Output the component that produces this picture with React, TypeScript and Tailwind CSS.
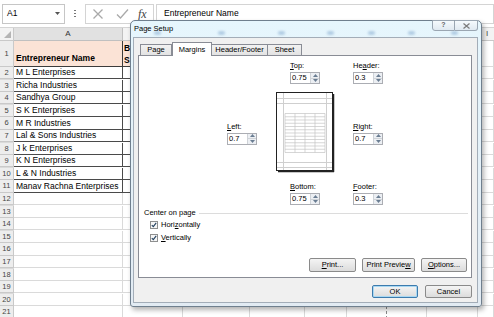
import React from "react";

const names = [
  "M L Enterprises",
  "Richa Industries",
  "Sandhya Group",
  "S K Enterprises",
  "M R Industries",
  "Lal & Sons Industries",
  "J k Enterprises",
  "K N Enterprises",
  "L & N Industries",
  "Manav Rachna Enterprises",
];

const cols = "grid grid-cols-[14px_109px_60px_67px_55px_42px_40px_40px_51px_1fr]";
const grid = "border-r border-b border-[#dadada]";

const Blank = () => (
  <>
    <div className={grid} />
    <div className={grid} />
    <div className={grid} />
    <div className={`${grid} [border-right-style:dashed] border-r-[#8a8a8a]`} />
    <div className={grid} />
    <div className={grid} />
    <div className={grid} />
    <div className="border-b border-[#dadada]" />
  </>
);

const RowHead = ({ n }: { n: number }) => (
  <div className="flex items-center justify-center border-r border-b border-[#c9c9c9] bg-[#ededed] text-[7.5px] text-[#444]">
    {n}
  </div>
);

function Sheet() {
  const rows = Array.from({ length: 20 }, (_, i) => i + 2);
  return (
    <div className="flex flex-col font-['Liberation_Sans',sans-serif]">
      {/* column headers, B..H sit under the dialog */}
      <div className={`${cols} h-[14px] border-t border-[#d4d4d4]`}>
        <div className="relative border-r border-b border-[#c9c9c9] bg-[#f3f3f3]">
          <svg className="absolute bottom-[2px] right-[2px]" width="7" height="7">
            <path d="M7 0 L7 7 L0 7Z" fill="#b5b5b5" />
          </svg>
        </div>
        <div className="flex items-center justify-center border-r border-b border-[#c0c0c0] bg-[#e1e1e1] text-[8px] text-[#333]">
          A
        </div>
        {["b", "c", "d", "e", "f", "g", "h"].map((c) => (
          <div key={c} className="border-r border-b border-[#c9c9c9] bg-[#f3f3f3]" />
        ))}
        <div className="flex items-center pl-[8px] border-b border-[#c9c9c9] bg-[#f3f3f3] text-[8px] text-[#444]">
          I
        </div>
      </div>

      {/* row 1 */}
      <div className={`${cols} h-[26px]`}>
        <RowHead n={1} />
        <div className="flex items-end border-r border-b border-[#3c3c3c] bg-[#fbe3d6] pb-[1px] pl-[2px] text-[8.5px] font-bold text-black">
          Entrepreneur Name
        </div>
        <div className="border-r border-b border-[#3c3c3c] bg-[#fbe3d6] pl-[1px] pt-[1px]">
          <div className="w-[6px] overflow-hidden text-[8.5px] font-bold leading-[12px] text-black">
            B
            <br />S
          </div>
        </div>
        <Blank />
      </div>

      {rows.map((r) => (
        <div key={r} className={`${cols} h-[12.6px]`}>
          <RowHead n={r} />
          {r <= 11 ? (
            <>
              <div className="flex items-center overflow-hidden whitespace-nowrap border-r border-b border-[#4a4a4a] pl-[2px] text-[8.5px] text-black">
                {names[r - 2]}
              </div>
              <div className="border-r border-b border-[#4a4a4a]" />
            </>
          ) : (
            <>
              <div className={grid} />
              <div className={grid} />
            </>
          )}
          <Blank />
        </div>
      ))}
    </div>
  );
}

function FormulaBar() {
  return (
    <div className="flex h-[27px] items-center bg-white pl-[2px] font-['Liberation_Sans',sans-serif]">
      <div className="flex h-[20px] w-[63px] items-center justify-between border border-[#c6c6c6] pl-[4px] pr-[4px] text-[8.5px] text-black">
        A1
        <svg width="5" height="3">
          <path d="M0 0 L5 0 L2.5 3Z" fill="#555" />
        </svg>
      </div>
      <div className="flex w-[20px] flex-col items-center gap-[1.5px]">
        <span className="h-[1.5px] w-[1.5px] bg-[#777]" />
        <span className="h-[1.5px] w-[1.5px] bg-[#777]" />
        <span className="h-[1.5px] w-[1.5px] bg-[#777]" />
      </div>
      <div className="flex h-[20px] w-[69px] items-center border border-[#d4d4d4] pl-[6px]">
        <svg width="12" height="12" viewBox="0 0 12 12">
          <path d="M1.5 1.5 L10.5 10.5 M10.5 1.5 L1.5 10.5" stroke="#a9a9a9" strokeWidth="1.3" />
        </svg>
        <svg className="ml-[12px]" width="13" height="12" viewBox="0 0 13 12">
          <path d="M1 6.5 L4.5 10 L12 1.5" stroke="#a9a9a9" strokeWidth="1.3" fill="none" />
        </svg>
        <span className="ml-[9px] font-['Liberation_Serif',serif] text-[12px] italic text-[#444]">fx</span>
      </div>
      <div className="ml-[2px] flex h-[20px] flex-1 items-center border border-[#d4d4d4] pl-[7px] text-[8.5px] text-black">
        Entrepreneur Name
      </div>
    </div>
  );
}

const U = ({ a, u, b }: { a?: string; u: string; b?: string }) => (
  <span>
    {a}
    <span className="underline">{u}</span>
    {b}
  </span>
);

function Spin({ v }: { v: string }) {
  return (
    <div className="flex h-[12px] w-[30px] border border-[#abadb3] bg-white">
      <span className="flex-1 pl-[1px] text-[7.5px] leading-[10px] text-black">{v}</span>
      <span className="flex w-[9px] flex-col border-l border-[#cfd3d8] bg-[#eceff3]">
        <span className="flex flex-1 items-center justify-center border-b border-[#cfd3d8]">
          <svg width="5" height="3">
            <path d="M0 3 L2.5 0 L5 3Z" fill="#6a7d92" />
          </svg>
        </span>
        <span className="flex flex-1 items-center justify-center">
          <svg width="5" height="3">
            <path d="M0 0 L5 0 L2.5 3Z" fill="#6a7d92" />
          </svg>
        </span>
      </span>
    </div>
  );
}

const Field = ({ label, v }: { label: React.ReactNode; v: string }) => (
  <div className="flex flex-col gap-[1px]">
    <div className="h-[11px] text-[7.5px] leading-[11px] text-black">{label}</div>
    <Spin v={v} />
  </div>
);

function Preview() {
  const rowsY = Array.from({ length: 13 }, (_, i) => 21.5 + i * 3.25);
  return (
    <svg width="59" height="81" viewBox="0 0 59 81">
      <rect x="0.5" y="0.5" width="56" height="78" fill="#fff" stroke="#222" />
      <path d="M57.5 2 V80 M2 79.5 H58" stroke="#222" strokeWidth="1.5" />
      <g stroke="#cfcfcf" strokeWidth="1">
        <path d="M7.5 1 V78 M50.5 1 V78 M1 6.5 H56 M1 11.5 H56 M1 70.5 H56 M1 75.5 H56" />
      </g>
      <g stroke="#c4c4c4" strokeWidth="0.7">
        {[9, 19, 29, 39, 49].map((x) => (
          <path key={x} d={`M${x} 21.5 V60.5`} />
        ))}
        {rowsY.map((y) => (
          <path key={y} d={`M9 ${y} H49`} />
        ))}
      </g>
    </svg>
  );
}

const Check = () => (
  <svg width="8" height="8" viewBox="0 0 8 8">
    <rect x="0.5" y="0.5" width="7" height="7" fill="#f6f6f6" stroke="#8e8f8f" />
    <path d="M1.8 4.2 L3.3 5.7 L6.2 1.9" stroke="#22405f" strokeWidth="1.1" fill="none" />
  </svg>
);

const Btn = ({ w, children, def }: { w: string; children: React.ReactNode; def?: boolean }) => (
  <div
    className={`flex items-center justify-center rounded-[2px] border bg-gradient-to-b from-[#f4f4f4] to-[#dcdcdc] text-[7.5px] text-black ${w} ${
      def ? "border-[#3d7bad] shadow-[inset_0_0_0_1px_#a8d8f3]" : "border-[#8a8a8a]"
    }`}
  >
    {children}
  </div>
);

// blurred column letters seen through the glass title bar
const spots = [
  "left-[23px]",
  "left-[87px]",
  "left-[147px]",
  "left-[196px]",
  "left-[237px]",
  "left-[277px]",
  "left-[320px]",
];

function Dialog() {
  return (
    <div className="absolute left-[130px] top-[20px] flex h-[287px] w-[352px] flex-col rounded-t-[5px] rounded-b-[3px] border border-[#6f7f8e] bg-gradient-to-b from-[#e6f6fd] to-[#e2ebf3] font-['Liberation_Sans',sans-serif] shadow-[2px_3px_5px_rgba(0,0,0,0.3)]">
      {/* title bar */}
      <div className="relative flex h-[16px] items-center pl-[3px] text-[7.5px] text-black">
        {spots.map((s) => (
          <span key={s} className={`absolute top-[10px] h-[4px] w-[7px] rounded-full bg-[#7fa5cc]/50 blur-[1px] ${s}`} />
        ))}
        <span className="relative">Page Setup</span>
        <div className="absolute right-[3px] top-[-1px] flex">
          <div className="flex h-[11px] w-[23px] items-center justify-center rounded-bl-[3px] border border-[#9aa6b2] bg-gradient-to-b from-[#f5fafd] to-[#e0e9f1] text-[7px] font-bold text-[#666]">
            ?
          </div>
          <div className="flex h-[11px] w-[23px] items-center justify-center rounded-br-[3px] border border-l-0 border-[#9aa6b2] bg-gradient-to-b from-[#f5fafd] to-[#e0e9f1]">
            <svg width="7" height="6" viewBox="0 0 7 6">
              <path d="M0.5 0.5 L6.5 5.5 M6.5 0.5 L0.5 5.5" stroke="#7a7a7a" strokeWidth="1.2" />
            </svg>
          </div>
        </div>
      </div>

      {/* client */}
      <div className="mb-[3px] ml-[2px] mr-[3px] flex flex-1 flex-col border border-[#a3adb8] bg-[#f0f0f0] pl-[4px] pr-[5px] pt-[4px]">
        <div className="flex h-[13px] items-end pl-[2px] text-[7.5px] text-black">
          <div className="flex h-[11px] w-[32px] items-center justify-center border border-b-0 border-[#898c95] bg-gradient-to-b from-[#f2f2f2] to-[#e3e3e3]">
            Page
          </div>
          <div className="relative z-10 -mb-px flex h-[14px] w-[40px] items-center justify-center border border-b-0 border-[#898c95] bg-white">
            Margins
          </div>
          <div className="flex h-[11px] w-[56px] items-center justify-center border border-b-0 border-l-0 border-[#898c95] bg-gradient-to-b from-[#f2f2f2] to-[#e3e3e3]">
            Header/Footer
          </div>
          <div className="flex h-[11px] w-[34px] items-center justify-center border border-b-0 border-l-0 border-[#898c95] bg-gradient-to-b from-[#f2f2f2] to-[#e3e3e3]">
            Sheet
          </div>
        </div>

        {/* tab panel */}
        <div className="flex h-[223px] flex-col border border-[#898c95] bg-white text-black">
          <div className="grid grid-cols-[118px_58px_auto] grid-rows-[24px_81px_24px] gap-x-[19px] gap-y-[8px] pt-[4px]">
            <div />
            <div className="justify-self-center">
              <Field label={<U u="T" b="op:" />} v="0.75" />
            </div>
            <div className="justify-self-start">
              <Field label={<U a="He" u="a" b="der:" />} v="0.3" />
            </div>
            <div className="self-center justify-self-end">
              <Field label={<U u="L" b="eft:" />} v="0.7" />
            </div>
            <div>
              <Preview />
            </div>
            <div className="self-center justify-self-start">
              <Field label={<U u="R" b="ight:" />} v="0.7" />
            </div>
            <div />
            <div className="justify-self-center">
              <Field label={<U u="B" b="ottom:" />} v="0.75" />
            </div>
            <div className="justify-self-start">
              <Field label={<U u="F" b="ooter:" />} v="0.3" />
            </div>
          </div>

          <div className="mt-[3px] flex h-[10px] items-center pl-[5px] pr-[3px] text-[7.5px]">
            Center on page
            <div className="ml-[3px] flex-1 border-t border-[#dcdcdc]" />
          </div>
          <div className="flex h-[13px] items-center gap-[3px] pl-[11px] text-[7.5px]">
            <Check />
            <U a="Hori" u="z" b="ontally" />
          </div>
          <div className="flex h-[13px] items-center gap-[3px] pl-[11px] text-[7.5px]">
            <Check />
            <U u="V" b="ertically" />
          </div>

          <div className="mt-auto flex justify-end gap-[6px] pb-[5px] pr-[4px]">
            <Btn w="h-[14px] w-[47px]">
              <U u="P" b="rint..." />
            </Btn>
            <Btn w="h-[14px] w-[53px]">
              <U a="Print Previe" u="w" />
            </Btn>
            <Btn w="h-[14px] w-[46px]">
              <U u="O" b="ptions..." />
            </Btn>
          </div>
        </div>

        <div className="mt-[7px] flex justify-end gap-[7px]">
          <Btn w="h-[13px] w-[46px]" def>
            OK
          </Btn>
          <Btn w="h-[13px] w-[47px]">Cancel</Btn>
        </div>
      </div>
    </div>
  );
}

export default function App() {
  return (
    <div className="relative h-[317px] w-[494px] overflow-hidden bg-white">
      <FormulaBar />
      <Sheet />
      <Dialog />
    </div>
  );
}
